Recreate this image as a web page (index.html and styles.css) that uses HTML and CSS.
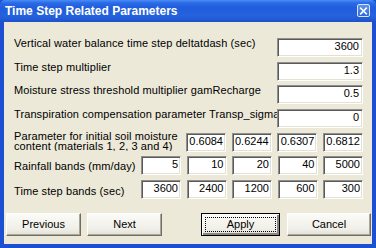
FILE: index.html
```html
<!DOCTYPE html>
<html>
<head>
<meta charset="utf-8">
<link rel="stylesheet" href="styles.css">
</head>
<body>
<div class="window">
  <div class="titlebar">
    <span class="title">Time Step Related Parameters</span>
    <span class="close">
      <svg width="12" height="12" viewBox="0 0 12 12"><path d="M3 3 L9 9 M9 3 L3 9" stroke="#fff" stroke-width="1.8" stroke-linecap="square"/></svg>
    </span>
  </div>
  <div class="client">
    <div class="rows">
      <div class="row"><div class="label">Vertical water balance time step deltatdash (sec)</div><div class="field single">3600</div></div>
      <div class="row"><div class="label">Time step multiplier</div><div class="field single">1.3</div></div>
      <div class="row"><div class="label">Moisture stress threshold multiplier gamRecharge</div><div class="field single">0.5</div></div>
      <div class="row"><div class="label">Transpiration compensation parameter Transp_sigma</div><div class="field single">0</div></div>
      <div class="row"><div class="label two">Parameter for initial soil moisture<br>content (materials 1, 2, 3 and 4)</div>
        <div class="cells four"><div class="field cell">0.6084</div><div class="field cell">0.6244</div><div class="field cell">0.6307</div><div class="field cell">0.6812</div></div></div>
      <div class="row"><div class="label low">Rainfall bands (mm/day)</div>
        <div class="cells five"><div class="field cell">5</div><div class="field cell">10</div><div class="field cell">20</div><div class="field cell">40</div><div class="field cell">5000</div></div></div>
      <div class="row"><div class="label lower">Time step bands (sec)</div>
        <div class="cells five"><div class="field cell">3600</div><div class="field cell">2400</div><div class="field cell">1200</div><div class="field cell">600</div><div class="field cell">300</div></div></div>
    </div>
    <div class="buttons">
      <div class="btn prev">Previous</div>
      <div class="btn next">Next</div>
      <div class="btn apply"><span class="focus">Apply</span></div>
      <div class="btn cancel">Cancel</div>
    </div>
  </div>
</div>
</body>
</html>
```
FILE: styles.css
```css
html, body {
  margin: 0;
  padding: 0;
  width: 376px;
  height: 248px;
  overflow: hidden;
}
.window {
  width: 376px;
  height: 248px;
  box-sizing: border-box;
  background: #1c4fd2;
  display: flex;
  flex-direction: column;
  font-family: "Liberation Sans", Arial, sans-serif;
  font-size: 11px;
  color: #000;
}
.titlebar {
  height: 22px;
  flex: none;
  display: flex;
  align-items: center;
  justify-content: space-between;
  padding: 0 6px 0 5px;
  background: linear-gradient(#4a8df5 0px, #2a6ae6 3px, #1f5ddc 8px, #2562de 16px, #1d52c9 22px);
  border-radius: 5px 5px 0 0;
}
.title {
  color: #fff;
  font-weight: bold;
  font-size: 12px;
  line-height: 14px;
  margin-top: -1px;
}
.close {
  width: 11px;
  height: 11px;
  border: 1px solid #d8e4fb;
  border-radius: 2px;
  background: linear-gradient(#5d94f2, #2f67dc);
  display: flex;
  align-items: center;
  justify-content: center;
  margin-top: -1px;
}
.close svg { display: block; }
.client {
  flex: 1;
  margin: 0 4px 4px 4px;
  background: #ece9d8;
  padding-top: 16px;
  box-sizing: border-box;
  display: flex;
  flex-direction: column;
}
.rows {
  display: flex;
  flex-direction: column;
  gap: 4.7px;
  padding: 0 9px 0 10px;
}
.row {
  height: 19px;
  display: flex;
  align-items: flex-start;
}
.label {
  flex: 1;
  min-width: 0;
  white-space: nowrap;
  overflow: hidden;
  line-height: 13px;
  margin-top: -1px;
  padding-right: 2px;
  letter-spacing: 0.1px;
}
.label.two {
  line-height: 10px;
  margin-top: -2px;
}
.label.low { margin-top: 3.5px; }
.label.lower { margin-top: 4.5px; }
.field {
  height: 19px;
  box-sizing: border-box;
  background: #fff;
  border: 1px solid;
  border-color: #8f8f8f #fff #fff #8f8f8f;
  box-shadow: inset 1px 1px 0 #5a5a5a, inset -1px -1px 0 #e4e1d4;
  text-align: right;
  padding: 1px 3px 0 0;
  line-height: 13px;
  white-space: nowrap;
  overflow: hidden;
}
.single { width: 86px; flex: none; }
.cells {
  flex: none;
  display: flex;
  justify-content: space-between;
}
.cells.four { width: 177px; }
.cells.five { width: 222px; }
.cell { width: 40px; padding-right: 2px; }
.buttons {
  display: flex;
  margin-top: 14px;
  padding-left: 2px;
}
.btn {
  height: 23px;
  box-sizing: border-box;
  display: flex;
  align-items: center;
  justify-content: center;
  background: linear-gradient(#fbfbf8, #f0efe8 70%, #e3e1d6);
  border: 1px solid;
  border-color: #ffffff #6f6e66 #6f6e66 #ffffff;
  box-shadow: inset -1px -1px 0 #a9a79c;
  line-height: 13px;
}
.prev { width: 75px; }
.next { width: 75px; margin-left: 6px; }
.apply {
  width: 79px;
  margin-left: 39px;
  border: 1px solid #000;
  box-shadow: inset 1px 1px 0 #fff, inset -2px -2px 0 #8a887e;
  padding: 3px;
}
.focus {
  flex: 1;
  align-self: stretch;
  display: flex;
  align-items: center;
  justify-content: center;
  border: 1px dotted #000;
}
.cancel { width: 84px; margin-left: 7px; }
```
